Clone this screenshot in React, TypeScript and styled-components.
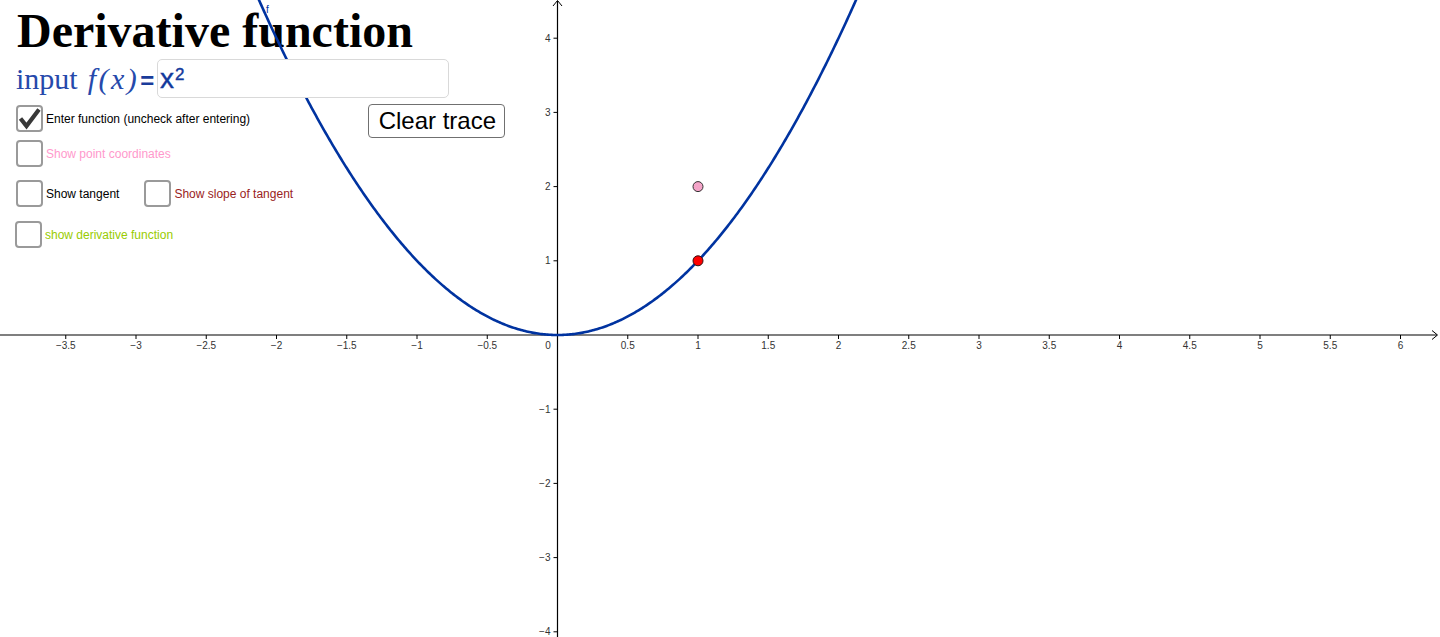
import React from 'react';
import styled, { createGlobalStyle } from 'styled-components';

const GlobalStyle = createGlobalStyle`
  html, body {
    margin: 0;
    padding: 0;
    background: #ffffff;
    overflow: hidden;
  }
  body {
    font-family: 'Liberation Sans', Arial, sans-serif;
  }
`;

// graph coordinate system
const W = 1440;
const H = 637;
const OX = 557.5;
const OY = 335;
const SX = 140.5;
const SY = 74.2;

const px = (x: number) => OX + x * SX;
const py = (y: number) => OY - y * SY;

const Stage = styled.div`
  position: relative;
  width: ${W}px;
  height: ${H}px;
  overflow: hidden;
  background: #ffffff;
`;

const Graph = styled.svg`
  position: relative;
  z-index: 1;
  display: block;
`;

const Panel = styled.div`
  position: absolute;
  top: 7px;
  left: 16px;
  width: 489px;
  display: flex;
  flex-direction: column;
`;

const Title = styled.h1`
  position: relative;
  z-index: 0;
  margin: 0 0 0 1px;
  height: 48px;
  font: 700 48px/48px 'Liberation Serif', 'Times New Roman', serif;
  color: #000000;
  white-space: nowrap;
`;

const InputRow = styled.div`
  position: relative;
  z-index: 2;
  display: flex;
  align-items: center;
  margin-top: 4px;
  height: 39px;
`;

const MathLabel = styled.div`
  display: flex;
  align-items: baseline;
  width: 141px;
  color: #2649ab;
  font: 30px/39px 'Liberation Serif', 'Times New Roman', serif;
  white-space: nowrap;
`;

const Italic = styled.span`
  font-style: italic;
  margin-left: 10px;
  letter-spacing: 2.5px;
`;

const Equals = styled.span`
  font: 700 24px 'Liberation Sans', Arial, sans-serif;
  color: #1a3c9a;
  margin-left: 1px;
`;

const InputBox = styled.div`
  box-sizing: border-box;
  width: 292px;
  height: 39px;
  border: 1px solid #d9d9d9;
  border-radius: 5px;
  background: #ffffff;
  padding: 1px 0 0 2px;
  display: flex;
  align-items: center;
  font: 28px/1 'Liberation Sans', Arial, sans-serif;
  color: #12399c;
  -webkit-text-stroke: 0.4px #12399c;
`;

const Sup = styled.span`
  font-size: 17px;
  position: relative;
  top: -5px;
  margin-left: 1px;
`;

const Row = styled.div<{ $top: number; $left?: number }>`
  position: relative;
  z-index: 2;
  display: flex;
  align-items: flex-start;
  justify-content: space-between;
  margin-top: ${(p) => p.$top}px;
  margin-left: ${(p) => p.$left ?? 0}px;
`;

const Group = styled.div`
  display: flex;
  align-items: flex-start;
`;

const Item = styled.label<{ $gap?: number; $offset?: number }>`
  display: flex;
  align-items: center;
  margin-left: ${(p) => p.$gap ?? 0}px;
  margin-top: ${(p) => p.$offset ?? 0}px;
`;

const Box = styled.span`
  box-sizing: border-box;
  width: 27px;
  height: 27px;
  border: 2px solid #9a9a9a;
  border-radius: 4px;
  background: #ffffff;
  display: flex;
  align-items: center;
  justify-content: center;
`;

const Caption = styled.span<{ $color: string }>`
  margin-left: 3px;
  font: 12px 'Liberation Sans', Arial, sans-serif;
  color: ${(p) => p.$color};
  white-space: nowrap;
`;

const ClearButton = styled.button`
  box-sizing: border-box;
  height: 34px;
  padding: 0 8px 0 10px;
  border: 1px solid #707070;
  border-radius: 4px;
  background: #ffffff;
  font: 24px 'Liberation Sans', Arial, sans-serif;
  color: #000000;
  cursor: pointer;
`;

const CheckBox: React.FC<{ checked?: boolean }> = ({ checked }) => (
  <Box>
    {checked && (
      <svg width="23" height="23" viewBox="0 0 23 23">
        <path d="M2.5 11.5 L8.5 19 L21 2.5" fill="none" stroke="#383838" strokeWidth="4.2" strokeLinejoin="miter" />
      </svg>
    )}
  </Box>
);

const fmt = (v: number) => (v < 0 ? '\u2212' + String(-v) : String(v));

const xTicks: number[] = [];
for (let v = -3.5; v <= 6.001; v += 0.5) xTicks.push(Math.round(v * 10) / 10);
const yTicks = [4, 3, 2, 1, -1, -2, -3, -4];

const curve = (() => {
  const pts: string[] = [];
  for (let x = -2.2; x <= 2.2001; x += 0.01) {
    pts.push(`${px(x).toFixed(2)},${py(x * x).toFixed(2)}`);
  }
  return 'M' + pts.join(' L');
})();

const Plot: React.FC = () => (
  <Graph width={W} height={H} viewBox={`0 0 ${W} ${H}`}>
    {/* axes */}
    <line x1={0} y1={OY} x2={1437} y2={OY} stroke="#000" strokeWidth={1.2} />
    <path d={`M1432 ${OY - 4.5} L1437.5 ${OY} L1432 ${OY + 4.5}`} fill="none" stroke="#000" strokeWidth={1} />
    <line x1={OX} y1={H} x2={OX} y2={1} stroke="#000" strokeWidth={1.2} />
    <path d={`M${OX - 4.5} 6 L${OX} 0.5 L${OX + 4.5} 6`} fill="none" stroke="#000" strokeWidth={1} />

    {xTicks.map((v) =>
      v === 0 ? null : (
        <g key={`x${v}`}>
          <line x1={px(v)} y1={OY} x2={px(v)} y2={OY + 4} stroke="#000" strokeWidth={1} />
          <text x={px(v)} y={349} textAnchor="middle" fontSize={10} fontFamily="'Liberation Sans', Arial, sans-serif" fill="#333">
            {fmt(v)}
          </text>
        </g>
      )
    )}
    <text x={548} y={349} textAnchor="middle" fontSize={10} fontFamily="'Liberation Sans', Arial, sans-serif" fill="#333">
      0
    </text>

    {yTicks.map((v) => (
      <g key={`y${v}`}>
        <line x1={OX - 4} y1={py(v)} x2={OX} y2={py(v)} stroke="#000" strokeWidth={1} />
        <text x={550.5} y={py(v) + 3.5} textAnchor="end" fontSize={10} fontFamily="'Liberation Sans', Arial, sans-serif" fill="#333">
          {fmt(v)}
        </text>
      </g>
    ))}

    {/* f(x) = x^2 */}
    <path d={curve} fill="none" stroke="#0033a0" strokeWidth={2.6} />
    <text x={266} y={13} fontSize={10} fontFamily="'Liberation Sans', Arial, sans-serif" fill="#0033a0">
      f
    </text>

    {/* points */}
    <circle cx={px(1)} cy={py(2)} r={5} fill="#f4a4c8" stroke="#333" strokeWidth={1} />
    <circle cx={px(1)} cy={py(1)} r={5} fill="#ff0000" stroke="#331111" strokeWidth={1} />
  </Graph>
);

const App: React.FC = () => (
  <>
    <GlobalStyle />
    <Stage>
      <Plot />
      <Panel>
        <Title>Derivative function</Title>
        <InputRow>
          <MathLabel>
            <span>input</span>
            <Italic>f(x)</Italic>
            <Equals>=</Equals>
          </MathLabel>
          <InputBox>
            x<Sup>2</Sup>
          </InputBox>
        </InputRow>
        <Row $top={6}>
          <Item $offset={1}>
            <CheckBox checked />
            <Caption $color="#000000">Enter function (uncheck after entering)</Caption>
          </Item>
          <ClearButton>Clear trace</ClearButton>
        </Row>
        <Row $top={2}>
          <Item>
            <CheckBox />
            <Caption $color="#ff99cc">Show point coordinates</Caption>
          </Item>
        </Row>
        <Row $top={13}>
          <Group>
            <Item>
              <CheckBox />
              <Caption $color="#000000">Show tangent</Caption>
            </Item>
            <Item $gap={25}>
              <CheckBox />
              <Caption $color="#992222">Show slope of tangent</Caption>
            </Item>
          </Group>
        </Row>
        <Row $top={14} $left={-1}>
          <Item>
            <CheckBox />
            <Caption $color="#99cc00">show derivative function</Caption>
          </Item>
        </Row>
      </Panel>
    </Stage>
  </>
);

export default App;
